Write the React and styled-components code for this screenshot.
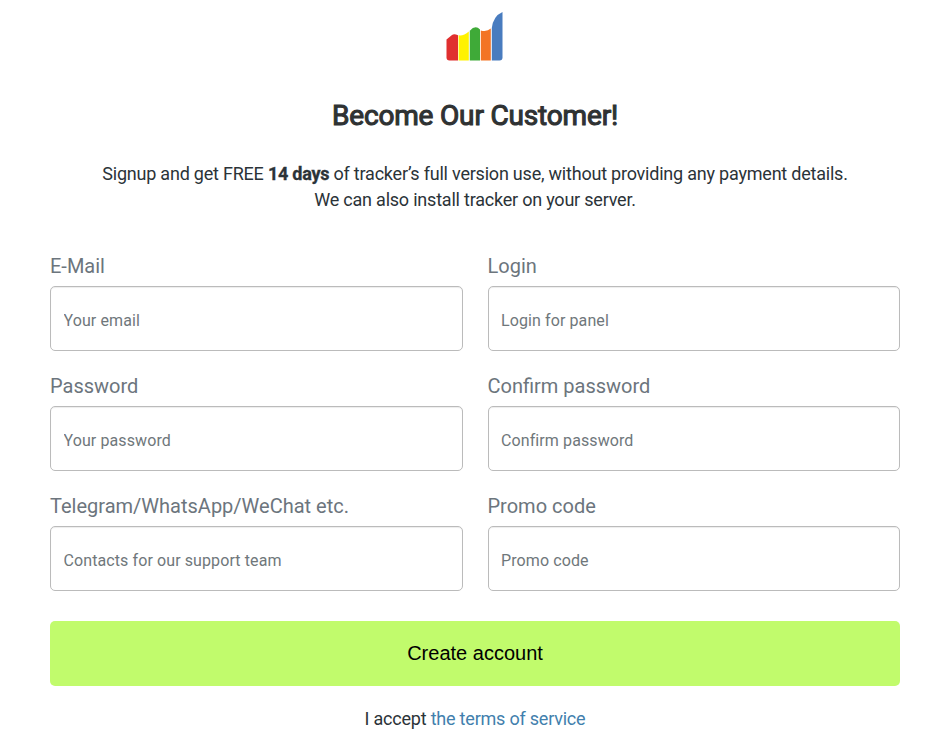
import React from "react";
import styled, { createGlobalStyle } from "styled-components";

const GlobalStyle = createGlobalStyle`
  * { box-sizing: border-box; }
  body { margin: 0; background: #fff; font-family: Roboto, sans-serif; color: #2b3338; }
`;
const Page = styled.main`
  width: 950px;
  height: 749px;
  padding: 12px 50px 0;
  overflow: hidden;
  display: flex;
  flex-direction: column;
  align-items: center;
`;
const Logo = styled.svg`
  width: 58px;
  height: 49px;
  display: block;
`;
const Title = styled.h1`
  margin: 38px 0 0;
  font-size: 28px;
  line-height: 34px;
  font-weight: 400;
  color: #2f3233;
  letter-spacing: -0.17px;
  -webkit-text-stroke: 1.1px #2f3233;
`;
const Intro = styled.p`
  margin: 28px 0 0;
  font-size: 18px;
  line-height: 26px;
  letter-spacing: -0.215px;
  text-align: center;
`;
const Strong = styled.strong`
  font-weight: 700;
  letter-spacing: -0.24px;
  -webkit-text-stroke: 0.3px currentColor;
`;
const Form = styled.form`
  width: 100%;
  margin-top: 38px;
`;
const Fields = styled.div`
  display: grid;
  grid-template-columns: 1fr 1fr;
  column-gap: 25px;
  row-gap: 20px;
`;
const Field = styled.label`
  display: block;
  height: 100px;
`;
const Label = styled.span`
  display: block;
  height: 35px;
  font-size: 20px;
  line-height: 30px;
  color: #6c757d;
`;
const Input = styled.input`
  display: block;
  width: 100%;
  height: 65px;
  padding: 6px 12.5px 2px;
  border: 1px solid #bbb;
  border-radius: 5px;
  outline: none;
  font: 16px Roboto, sans-serif;
  letter-spacing: 0.1px;
  box-shadow: inset 0 1px 1px rgba(0, 0, 0, 0.075);
  &::placeholder { color: #6f777b; opacity: 1; }
`;
const Submit = styled.button`
  display: block;
  width: 100%;
  height: 65px;
  margin-top: 30px;
  border: 0;
  border-radius: 5px;
  background: #c1fb6c;
  color: #000;
  font: 20px "Liberation Sans", Arial, sans-serif;
`;
const Terms = styled.p`
  margin: 20px 0 0;
  font-size: 18px;
  line-height: 26px;
  letter-spacing: -0.215px;
  text-align: center;
`;
const TermsLink = styled.a`
  color: #427fad;
  text-decoration: none;
`;

const fields = [
  ["E-Mail", "Your email", "email"],
  ["Login", "Login for panel", "text"],
  ["Password", "Your password", "password"],
  ["Confirm password", "Confirm password", "password"],
  ["Telegram/WhatsApp/WeChat etc.", "Contacts for our support team", "text"],
  ["Promo code", "Promo code", "text"],
];

export default function App() {
  return (
    <Page>
      <GlobalStyle />
      <Logo viewBox="446 12 58 49" aria-hidden="true">
        <path fill="#e02f2f" d="M446.5 39.5L452 35q2-1.500 6 .2V60.500h-8.500q-3 0-3-3z" />
        <path fill="#fff200" d="M458.600 35.300q5 .8 10.200-3.800v29h-10.200z" />
        <path fill="#3faa38" d="M469.800 30.700q5.500-6 10.200-1.200v31h-10.200z" />
        <path fill="#f37425" d="M480.800 30.400q6 1.800 10-1.900v32h-10z" />
        <path fill="#497cbf" d="M491.800 28q1.500-12 10.700-16v45.500q0 3-3 3h-7.700z" />
      </Logo>
      <Title>Become Our Customer!</Title>
      <Intro>
        Signup and get FREE <Strong>14 days</Strong> of tracker’s full version use, without providing any payment details.
        <br />
        We can also install tracker on your server.
      </Intro>
      <Form>
        <Fields>
          {fields.map(([label, hint, type]) => (
            <Field key={label}>
              <Label>{label}</Label>
              <Input type={type} placeholder={hint} />
            </Field>
          ))}
        </Fields>
        <Submit type="button">Create account</Submit>
        <Terms>
          I accept <TermsLink href="#terms">the terms of service</TermsLink>
        </Terms>
      </Form>
    </Page>
  );
}
